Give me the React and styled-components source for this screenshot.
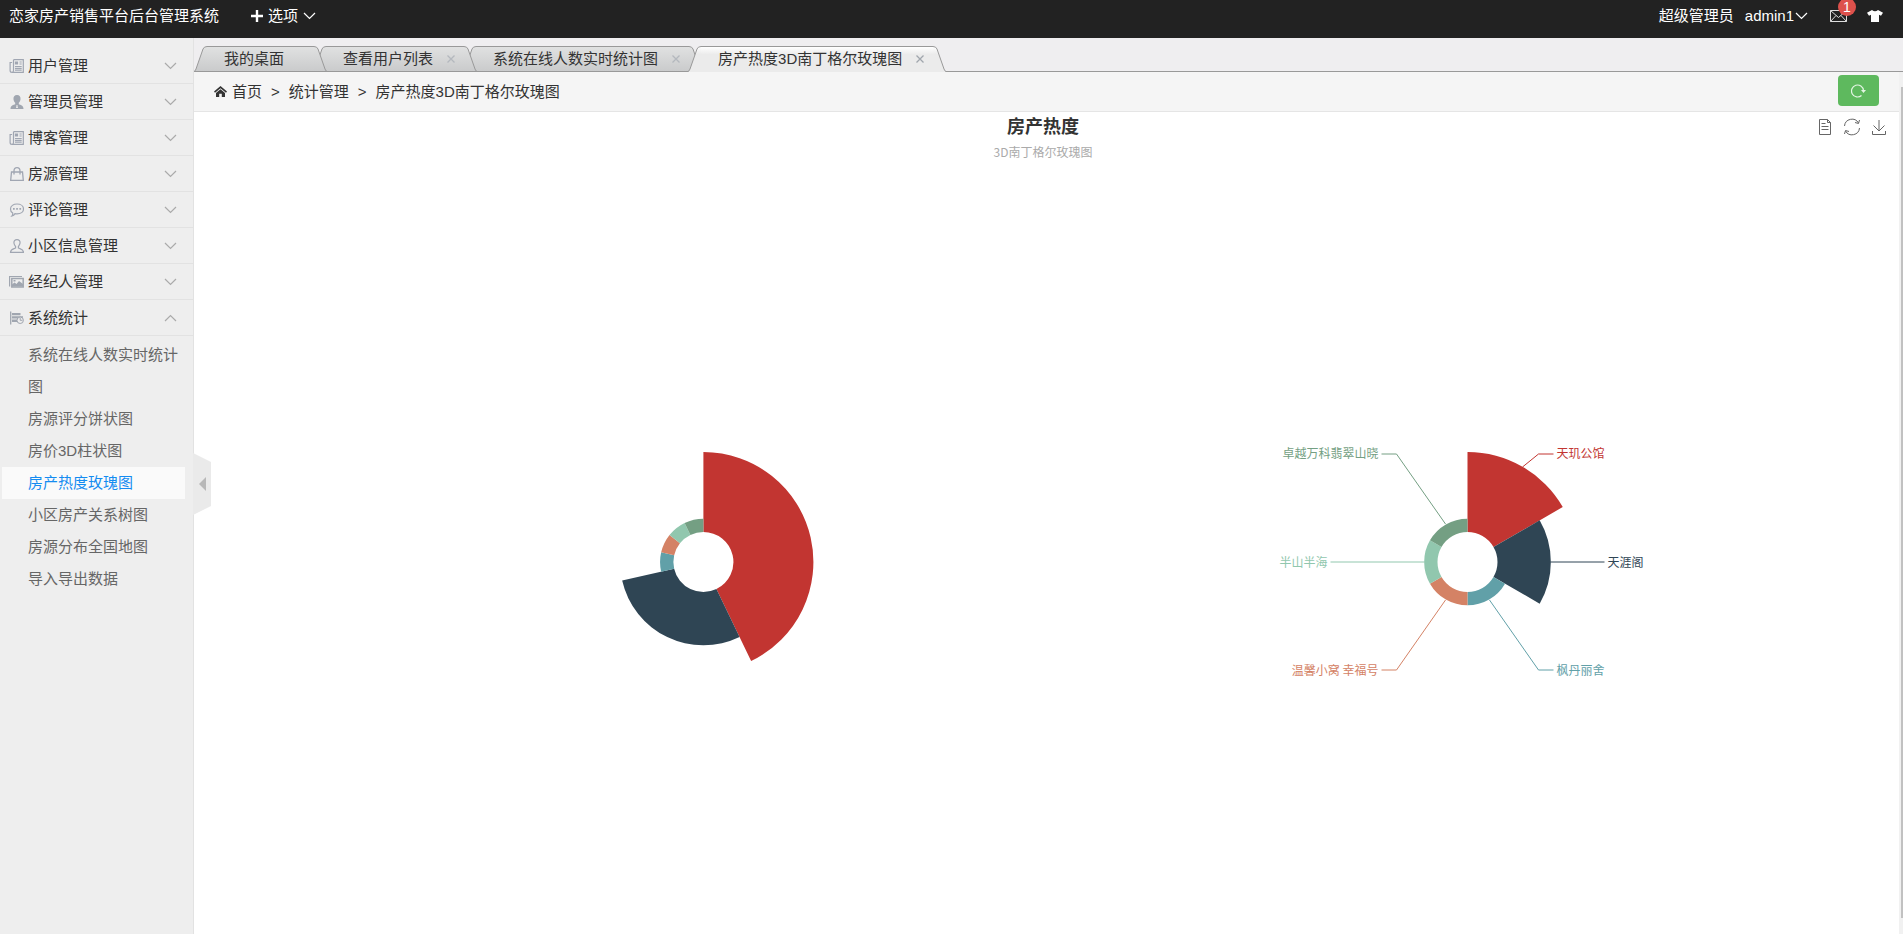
import React from "react";
import styled, { createGlobalStyle, css } from "styled-components";

const Global = createGlobalStyle`
  * { box-sizing: border-box; }
  html, body, #root { height: 100%; }
  body {
    margin: 0;
    overflow: hidden;
    font: 15px/22px "Liberation Sans", "Noto Sans CJK SC", sans-serif;
    color: #333;
  }
  button { font: inherit; color: inherit; background: none; border: 0; padding: 0; cursor: pointer; }
  a { color: inherit; text-decoration: none; }
  ul { list-style: none; margin: 0; padding: 0; }
  svg { display: block; }
`;

const Page = styled.div`
  display: flex;
  flex-direction: column;
  min-height: 100vh;
  height: 100%;
`;

const TopBar = styled.header`
  display: flex;
  align-items: center;
  flex: none;
  height: 38px;
  padding: 0 20px 6px 9px;
  background: #222;
  color: #fff;
`;
const Brand = styled.a`
  margin-right: 32px;
`;
const TopButton = styled.button`
  display: flex;
  align-items: center;
  gap: ${(p) => p.$gap || 5}px;
`;
const UserArea = styled.div`
  display: flex;
  align-items: center;
  margin-left: auto;
`;
const Role = styled.span`
  margin-right: 11px;
`;
const MailLink = styled.a`
  position: relative;
  margin: 0 20px 0 22px;
`;
const Badge = styled.span`
  position: absolute;
  left: 8px;
  top: -12px;
  width: 18px;
  height: 18px;
  border-radius: 50%;
  background: #dd514c;
  font-size: 14px;
  line-height: 18px;
  text-align: center;
`;

const Body = styled.div`
  display: flex;
  flex: 1;
  min-height: 0;
`;
const Sidebar = styled.nav`
  position: relative;
  flex: none;
  width: 194px;
  padding-top: 10px;
  border-right: 1px solid #e2e2e2;
  background: #eee;
`;
const GroupButton = styled.button`
  display: flex;
  align-items: center;
  gap: 4px;
  width: 100%;
  height: 36px;
  padding: 0 16px 0 9px;
  border-bottom: 1px solid #e2e2e2;
  & > span { flex: 1; text-align: left; }
`;
const SubList = styled.ul`
  padding: 3px 8px 0 2px;
`;
const SubLink = styled.a`
  display: block;
  padding: 0 0 0 26px;
  line-height: 32px;
  color: #666;
  ${(p) => p.$active && css`
    background: #fafafa;
    color: #148cf1;
  `}
`;
const Collapse = styled.button`
  position: absolute;
  left: 193px;
  top: 415px;
  z-index: 2;
`;

const Main = styled.main`
  display: flex;
  flex-direction: column;
  flex: 1;
  min-width: 0;
`;
const TabStrip = styled.ul`
  display: flex;
  align-items: flex-end;
  flex: none;
  height: 34px;
  background: #efeef0;
  box-shadow: inset 0 -1px #999;
`;
const Tab = styled.li`
  position: relative;
  display: flex;
  height: 26px;
  z-index: ${(p) => p.$z};
  & + & { margin-left: -14px; }
`;
const TabFace = styled.div`
  display: flex;
  align-items: center;
  gap: 14px;
  padding: 0 ${(p) => (p.$closable ? 9 : 30)}px 2px 17px;
  border-top: 1px solid #999;
  background: linear-gradient(#e0e1e1, #c9cacb);
  box-shadow: inset 0 -1px #999;
  ${(p) => p.$active && css`
    background: linear-gradient(#fff, #ebebeb 30%);
    box-shadow: none;
  `}
`;
const TabTitle = styled.a`
  white-space: nowrap;
`;

const Crumbs = styled.div`
  display: flex;
  align-items: center;
  flex: none;
  height: 40px;
  padding: 0 20px;
  border-bottom: 1px solid #e5e5e5;
  background: #f5f5f5;
`;
const HomeLink = styled.a`
  display: flex;
  align-items: center;
  gap: 5px;
`;
const Sep = styled.span`
  margin: 0 9px;
`;
const Refresh = styled.button`
  display: flex;
  align-items: center;
  justify-content: center;
  width: 41px;
  height: 31px;
  margin: 0 0 2px auto;
  border-radius: 4px;
  background: #5eb95e;
`;
const Frame = styled.div`
  display: flex;
  flex: 1;
  min-height: 0;
`;
const FrameContent = styled.div`
  flex: 1;
  min-width: 0;
  overflow: hidden;
`;
const Track = styled.div`
  width: 4px;
  padding: 15px 0 16px 2px;
  background: #f1f1f1;
`;
const Thumb = styled.div`
  height: 100%;
  background: #c1c1c1;
`;
const ChartPanel = styled.section`
  position: relative;
  height: 900px;
  margin-right: 7px;
  font-family: "Noto Sans CJK SC", sans-serif;
`;
const ChartHead = styled.div`
  position: absolute;
  inset: 0 0 auto;
  padding-top: 1px;
  text-align: center;
`;
const ChartTitle = styled.h1`
  margin: 0;
  font-size: 18px;
  line-height: 24px;
`;
const ChartSub = styled.p`
  margin: 0;
  font-size: 12px;
  line-height: 30px;
  color: #aaa;
`;
const Tools = styled.div`
  position: absolute;
  right: 4px;
  top: 6px;
  display: flex;
  gap: 9px;
`;
const ChartSvg = styled.svg`
  width: 100%;
  height: 100%;
  font-size: 12px;
`;

const Chevron = ({ up, color = "#aaa", w = 13 }) => (
  <svg width={w} height="8" viewBox="0 0 13 8" fill="none" stroke={color} strokeWidth="1.2">
    <path d={up ? "M1 7 6.500 1.500 12 7" : "M1 1 6.500 6.500 12 1"} />
  </svg>
);

const iconShapes = {
  news: (
    <g fill="none" stroke="#a0a6b2" strokeWidth="1.200">
      <path d="M4.500 .7h9.800v12.600H3q-1.900 0-1.900-1.900V3.500h2M4.500 .7v10.800q0 1.800-1.500 1.800" />
      <path d="M10.500 3h2.200M10.500 5h2.200M6 7.500h6.700M6 9.300h6.700M6 11.200h6.700" />
      <path fill="#a0a6b2" d="M6.500 3h2v2h-2z" />
    </g>
  ),
  manager: (
    <path fill="#a0a6b0" d="M8 0c2.600 0 3.800 1.800 3.500 4.200-.2 1.800-1 2.800-1.700 3.600v1.500c1.500.7 4.700 1 4.700 4.700H1.500c0-3.700 3.200-4 4.700-4.700V7.800C5.500 7 4.700 6 4.500 4.200 4.200 1.800 5.400 0 8 0zM7.500 10v1l-.5 2h2l-.5-2v-1z" />
  ),
  bag: (
    <path fill="none" stroke="#a0a6b2" strokeWidth="1.300" d="M2.500 5h11l.8 8.300H1.700zM5 7.500V4q0-3.300 3-3.300T11 4v3.500" />
  ),
  comment: (
    <g transform="translate(1 0)">
      <path fill="none" stroke="#a0a6b2" strokeWidth="1.200" d="M7 1c3.600 0 6.500 2 6.500 4.900S10.600 10.800 7 10.800c-.8 0-1.500-.1-2-.2-.6 1-1.500 2-3 2.400.6-.7.8-1.700.7-2.900C1.300 9.200.5 7.800.5 5.900.5 3 3.400 1 7 1z" />
      <path fill="#a0a6b2" d="M3 5h1.700v1.700H3zM6.200 5h1.700v1.700H6.200zM9.400 5h1.700v1.700H9.400z" />
    </g>
  ),
  person: (
    <path fill="none" stroke="#a0a6b2" strokeWidth="1.200" d="M8 .7c2.200 0 3.300 1.400 3 3.500-.2 1.600-1 2.400-1.600 3.200v1.500c1.500 1 5 1 5.100 4.400H1.500c.1-3.400 3.600-3.400 5.100-4.400V7.400C6 6.600 5.200 5.800 5 4.200 4.700 2.100 5.800.7 8 .7z" />
  ),
  photos: (
    <g>
      <path fill="none" stroke="#a0a6b0" strokeWidth="1.200" d="M.6 11.500V1.500H13" />
      <path fill="none" stroke="#a0a6b0" strokeWidth="1.500" d="M2.800 3.500H14.200V12H2.800z" />
      <path fill="#a0a6b0" d="M3 11.500V9.500l2.500-2 2 1.500 2.500-3 4 3v2.500zM4.500 5h2v1.500h-2z" />
    </g>
  ),
  stats: (
    <g>
      <path stroke="#a0a6b0" strokeWidth="1.300" d="M1.700 .5v13" />
      <path fill="#a0a6b0" d="M3 2h8.500v2.300H3zM3 5.200h11v2.300H3zM3 8.500h5V11H3z" />
      <circle cx="11.200" cy="9.300" r="3.200" fill="#eee" stroke="#a0a6b0" />
      <path stroke="#a0a6b0" d="M11.200 7v2.300h2.300" fill="none" />
    </g>
  ),
};
const MenuIcon = ({ name }) => (
  <svg width="15" height="14" viewBox="0 0 15 14" aria-hidden="true">{iconShapes[name]}</svg>
);

const groups = [
  ["用户管理", "news"],
  ["管理员管理", "manager"],
  ["博客管理", "news"],
  ["房源管理", "bag"],
  ["评论管理", "comment"],
  ["小区信息管理", "person"],
  ["经纪人管理", "photos"],
  ["系统统计", "stats"],
];
const subItems = [
  "系统在线人数实时统计图",
  "房源评分饼状图",
  "房价3D柱状图",
  "房产热度玫瑰图",
  "小区房产关系树图",
  "房源分布全国地图",
  "导入导出数据",
];
const tabs = ["我的桌面", "查看用户列表", "系统在线人数实时统计图", "房产热度3D南丁格尔玫瑰图"];

const Cap = ({ right, active }) => {
  const outline = right ? "M0 .5Q3 .5 4 3L11 23Q12 25.500 13 25.500" : "M13 .5Q10 .5 9 3L2 23Q1 25.500 0 25.500";
  return (
    <svg width="13" height="26" viewBox="0 0 13 26">
      <path d={outline + (right ? "V26H0Z" : "V26H13Z")} fill={active ? "url(#tabOn)" : "url(#tabOff)"} />
      <path d={outline} fill="none" stroke="#999" />
      {!active && <path d="M0 25.500h13" stroke="#999" />}
    </svg>
  );
};

const rose = [
  { name: "天玑公馆", value: 6, color: "#c23531" },
  { name: "天涯阁", value: 4, color: "#2f4554" },
  { name: "枫丹丽舍", value: 1, color: "#61a0a8" },
  { name: "温馨小窝 幸福号", value: 1, color: "#d48265" },
  { name: "半山半海", value: 1, color: "#91c7ae" },
  { name: "卓越万科翡翠山晓", value: 1, color: "#749f83" },
];
const leaders = [
  { points: "55,-95 71,-108 86,-108", x: 89, y: -104 },
  { points: "83,0 137,0", x: 140, y: 5 },
  { points: "22,38 71,108 86,108", x: 89, y: 113 },
  { points: "-22,38 -71,108 -86,108", x: -89, y: 113, end: true },
  { points: "-43,0 -137,0", x: -140, y: 5, end: true },
  { points: "-22,-38 -71,-108 -86,-108", x: -89, y: -104, end: true },
];
const INNER = 30;
const OUTER = 110;

const sector = (a0, a1, r) => {
  const at = (a, d) => `${d * Math.sin(a)} ${-d * Math.cos(a)}`;
  const large = a1 - a0 > Math.PI ? 1 : 0;
  return `M${at(a0, INNER)}L${at(a0, r)}A${r} ${r} 0 ${large} 1 ${at(a1, r)}L${at(a1, INNER)}A${INNER} ${INNER} 0 ${large} 0 ${at(a0, INNER)}Z`;
};

function Rose({ x, equal, labels }) {
  const total = rose.reduce((s, d) => s + (equal ? 1 : d.value), 0);
  let angle = 0;
  return (
    <svg x={x} y="50%" overflow="visible">
      {rose.map((d) => {
        const from = angle;
        angle += ((equal ? 1 : d.value) / total) * Math.PI * 2;
        const r = INNER + ((OUTER - INNER) * d.value) / rose[0].value;
        return <path key={d.name} d={sector(from, angle, r)} fill={d.color} />;
      })}
      {labels && leaders.map((l, i) => (
        <g key={rose[i].name}>
          <polyline points={l.points} fill="none" stroke={rose[i].color} />
          <text x={l.x} y={l.y} textAnchor={l.end ? "end" : "start"} fill={rose[i].color}>{rose[i].name}</text>
        </g>
      ))}
    </svg>
  );
}

export default function App() {
  return (
    <>
      <Global />
      <Page>
        <TopBar>
          <Brand href="#">恋家房产销售平台后台管理系统</Brand>
          <TopButton>
            <svg width="12" height="12" viewBox="0 0 12 12"><path d="M6 0v12M0 6h12" stroke="#fff" strokeWidth="2.400" /></svg>
            选项
            <Chevron color="#fff" />
          </TopButton>
          <UserArea>
            <Role>超级管理员</Role>
            <TopButton $gap={1}>admin1<Chevron color="#fff" /></TopButton>
            <MailLink href="#" aria-label="消息">
              <svg width="17" height="12" viewBox="0 0 17 12" fill="none" stroke="#ddd">
                <path d="M.5 .5h16v11H.500zM.5 .5 8.500 7.500 16.500 .5M.5 11.500 6 5.500M16.500 11.500 11 5.500" />
              </svg>
              <Badge>1</Badge>
            </MailLink>
            <TopButton aria-label="换肤">
              <svg width="16" height="12" viewBox="0 0 16 12"><path fill="#fff" d="M5 0q3 2.500 6 0l5 2.800-2 3-2-1V12H4V4.800l-2 1-2-3z" /></svg>
            </TopButton>
          </UserArea>
        </TopBar>
        <Body>
          <Sidebar>
            {groups.map(([name, icon], i) => (
              <GroupButton key={name} aria-expanded={i === 7}>
                <MenuIcon name={icon} />
                <span>{name}</span>
                <Chevron up={i === 7} />
              </GroupButton>
            ))}
            <SubList>
              {subItems.map((s, i) => (
                <li key={s}><SubLink href="#" $active={i === 3}>{s}</SubLink></li>
              ))}
            </SubList>
            <Collapse aria-label="收起菜单">
              <svg width="18" height="62" viewBox="0 0 18 62">
                <path fill="#eaeaea" d="M0 0 18 9V53L0 62z" />
                <path fill="#b8b8b8" d="M6 31 13 24V38z" />
              </svg>
            </Collapse>
          </Sidebar>
          <Main>
            <TabStrip>
              {tabs.map((t, i) => {
                const active = i === 3;
                return (
                  <Tab key={t} $z={active ? 9 : 4 - i}>
                    <Cap active={active} />
                    <TabFace $active={active} $closable={i > 0}>
                      <TabTitle href="#">{t}</TabTitle>
                      {i > 0 && (
                        <button aria-label="关闭">
                          <svg width="8" height="8" viewBox="0 0 8 8"><path d="M.5 .5l7 7M7.500 .5l-7 7" stroke={active ? "#a0a6ad" : "#b4b8be"} strokeWidth="1.300" /></svg>
                        </button>
                      )}
                    </TabFace>
                    <Cap right active={active} />
                  </Tab>
                );
              })}
            </TabStrip>
            <Frame>
              <FrameContent>
                <Crumbs>
                  <HomeLink href="#">
                    <svg width="13" height="11" viewBox="0 0 13 11" fill="#333"><path d="M6.500 0 13 5.500 12 6.700 6.500 2.200 1 6.700 0 5.500zM6.500 3.200 11 7v4H7.800V7.800H5.200V11H2V7z" /></svg>
                    首页
                  </HomeLink>
                  <Sep>&gt;</Sep>统计管理<Sep>&gt;</Sep>房产热度3D南丁格尔玫瑰图
                  <Refresh aria-label="刷新">
                    <svg width="15" height="14" viewBox="0 0 15 14"><path d="M10.500 11.500A6 6 0 1 1 12.500 6.500" fill="none" stroke="#e4f5e4" strokeWidth="1.200" /><path fill="#e4f5e4" d="M10 6h5l-2.500 3z" /></svg>
                  </Refresh>
                </Crumbs>
                <ChartPanel>
                  <ChartSvg role="img" aria-label="房产热度">
                    <defs>
                      <linearGradient id="tabOff" x1="0" y1="0" x2="0" y2="1">
                        <stop offset="0" stopColor="#e0e1e1" />
                        <stop offset="1" stopColor="#c9cacb" />
                      </linearGradient>
                      <linearGradient id="tabOn" x1="0" y1="0" x2="0" y2="1">
                        <stop offset="0" stopColor="#fff" />
                        <stop offset="0.300" stopColor="#ebebeb" />
                      </linearGradient>
                    </defs>
                    <Rose x="30%" />
                    <Rose x="75%" equal labels />
                  </ChartSvg>
                  <ChartHead>
                    <ChartTitle>房产热度</ChartTitle>
                    <ChartSub>3D南丁格尔玫瑰图</ChartSub>
                  </ChartHead>
                  <Tools>
                    <button aria-label="数据视图">
                      <svg width="18" height="18" viewBox="0 0 18 18" fill="none" stroke="#666"><path d="M3.500 1.500h8l3 3v12h-11zM11.500 1.500v3h3M5.500 5.500h4M5.500 8.500h7M5.500 11.500h7" /></svg>
                    </button>
                    <button aria-label="还原">
                      <svg width="18" height="18" viewBox="0 0 18 18" fill="none" stroke="#666"><path d="M1.500 8A7.500 7.500 0 0 1 15.500 5M16.500 10A7.500 7.500 0 0 1 2.500 13M16.500 2 15.500 5.500 12 4.500M1.500 16 2.500 12.500 6 13.500" /></svg>
                    </button>
                    <button aria-label="保存为图片">
                      <svg width="18" height="18" viewBox="0 0 18 18" fill="none" stroke="#666"><path d="M9 2v11M3.500 7.500 9 13 14.500 7.500M2.500 13v3.500h13V13" /></svg>
                    </button>
                  </Tools>
                </ChartPanel>
              </FrameContent>
              <Track><Thumb /></Track>
            </Frame>
          </Main>
        </Body>
      </Page>
    </>
  );
}
